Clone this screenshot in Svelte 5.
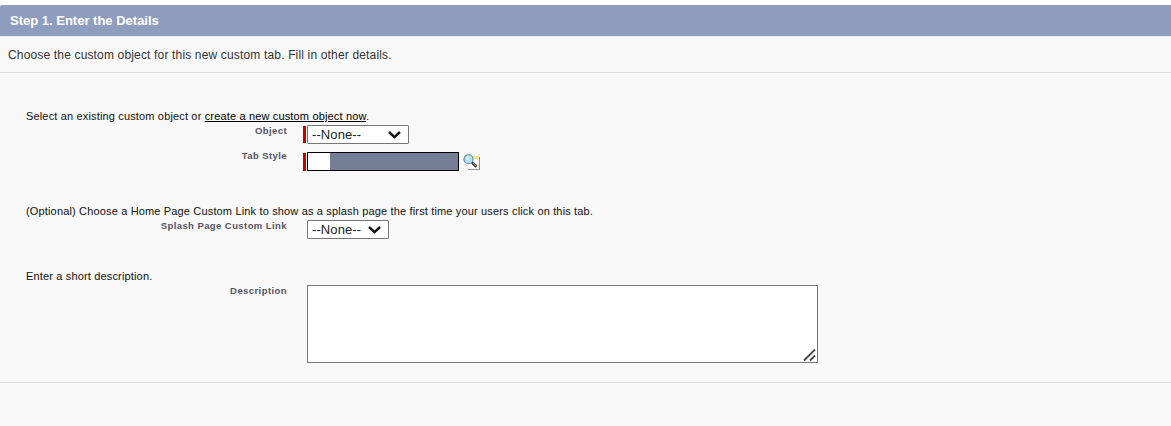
<script>
  let description = $state('');
</script>

{#snippet picker(wide)}
  <button class="select" class:wide type="button">
    <span>--None--</span>
    <svg width="13" height="8" viewBox="0 0 13 8"><path d="M1 1 6.5 6.1 12 1" fill="none" stroke="#111" stroke-width="2.4" /></svg>
  </button>
{/snippet}

<main>
  <h2>Step 1. Enter the Details</h2>
  <p class="intro">Choose the custom object for this new custom tab. Fill in other details.</p>

  <section class="fields">
    <p class="lead">Select an existing custom object or <a href="#new">create a new custom object now</a>.</p>
    <div class="row object">
      <span class="label">Object</span>
      <i class="mark required"></i>
      {@render picker(true)}
    </div>
    <div class="row style">
      <span class="label">Tab Style</span>
      <i class="mark required"></i>
      <div class="swatch"><i></i></div>
      <svg class="lookup" width="18" height="17" viewBox="0 0 18 17">
        <path d="M5 3H17V16H5Z" fill="#8a8a8a" />
        <path d="M4 2H16V15H4Z" fill="#fff" />
        <path d="M4 2H16V5H4Z" fill="#ffdb8c" />
        <path d="M4.3 11V14.7H15.7V5" fill="none" stroke="#ddd" stroke-width=".7" />
        <path d="M9 8.5 13.5 12.7" stroke="#3c3028" stroke-width="2.8" />
        <path d="M10 9 13 11.8" stroke="#c99a6a" stroke-width="1" />
        <circle cx="5.5" cy="5.3" r="4.5" fill="#b4dff6" stroke="#5c88a8" stroke-width="1.1" />
        <path d="M2.8 5.4Q3.4 2.4 6.4 2.3L5 5.4Z" fill="#edfaff" />
      </svg>
    </div>

    <p class="lead">(Optional) Choose a Home Page Custom Link to show as a splash page the first time your users click on this tab.</p>
    <div class="row splash">
      <span class="label">Splash Page Custom Link</span>
      <i class="mark"></i>
      {@render picker(false)}
    </div>

    <p class="lead">Enter a short description.</p>
    <div class="row">
      <span class="label">Description</span>
      <i class="mark"></i>
      <div class="area">
        <textarea aria-label="Description" bind:value={description}></textarea>
        <svg width="13" height="13" viewBox="0 0 13 13"><path d="M1 11.5 12 .5M7 11.5 12 6.5" stroke="#4a4a4a" stroke-width="1.9" /></svg>
      </div>
    </div>
  </section>
</main>

<style>
  :global(body) { margin: 0; background: #f8f8f8; overflow: hidden; }
  * { box-sizing: border-box; }
  main { height: 426px; border-top: 5px solid #fff; background: #f8f8f8; font: 11px "Liberation Sans", Arial, sans-serif; color: #222; }
  h2 { height: 31px; margin: 0; padding-left: 10px; background: #8e9dbe; border-top-left-radius: 2px; color: #fff; font: bold 13px/31px "Liberation Sans", Arial, sans-serif; }
  .intro { height: 37px; margin: 0; padding-left: 8px; border-top: 1px solid #e9e9e9; border-bottom: 1px solid #dbdbdb; box-shadow: inset 0 1px #fff, 0 1px #fff; color: #333; font-size: 12px; line-height: 36px; letter-spacing: .16px; }
  .fields { height: 310px; padding-top: 36px; border-bottom: 1px solid #dbdbdb; box-shadow: 0 1px #fff; }
  .lead { height: 16px; margin: 0; padding-left: 26px; line-height: 14px; white-space: nowrap; letter-spacing: .157px; color: #111; }
  .lead a { color: #000; text-underline-offset: 1px; }
  .row { display: flex; align-items: flex-start; }
  .label { width: 287px; margin-right: 16px; flex: none; text-align: right; font-size: 9.5px; line-height: 12px; font-weight: bold; letter-spacing: .42px; color: #555560; white-space: nowrap; }
  .mark { flex: none; width: 3px; height: 17px; margin: 1px 1px 0 0; }
  .required { background: #c00; }
  .object { height: 27px; }
  .style { height: 52px; }
  .splash { height: 49px; }
  .style .label { margin-top: -2px; }
  .style .mark { height: 18px; }
  .select { display: flex; justify-content: space-between; align-items: center; width: 82px; height: 19px; margin: 0; padding: 0 7px 0 4px; border: 1px solid #767676; border-radius: 1px; background: #fff; color: #222; font: 13px/17px "Liberation Sans", Arial, sans-serif; letter-spacing: .1px; }
  .select.wide { width: 102px; }
  .swatch { width: 152px; height: 19px; border: 1px solid #000; background: #747e96; }
  .swatch i { display: block; width: 22px; height: 17px; background: #fff; }
  .lookup { margin: 2px 0 0 4px; }
  .area { position: relative; width: 511px; height: 78px; }
  textarea { display: block; width: 100%; height: 100%; margin: 0; border: 1px solid #767676; background: #fff; resize: none; }
  .area svg { position: absolute; right: 2px; bottom: 1px; }
</style>
